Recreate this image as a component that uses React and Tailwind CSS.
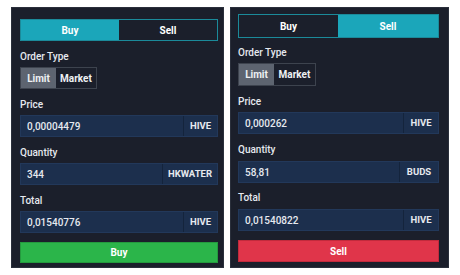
import React from "react";

function Field({ value, unit, unitW, h = "h-[22px]" }) {
  return (
    <div className={`flex ${h} bg-[#1c2f4d] border border-[#22385a]`}>
      <div className="flex-1 flex items-center pl-[6px] text-[10px] font-medium text-[#e6e9ef]">{value}</div>
      <div className={`${unitW} flex items-center justify-center border-l border-[#14243c] text-[9.5px] font-bold text-[#e6e9ef]`}>{unit}</div>
    </div>
  );
}

function Label({ children, cls }) {
  return <div className={`h-[12px] leading-[12px] text-[10px] font-medium text-[#e6e9ef] ${cls}`}>{children}</div>;
}

export default function App() {
  return (
    <div className="w-[460px] h-[275px] bg-white flex pt-[7px] pl-[11px] gap-[6px]" style={{ fontFamily: 'Roboto, "Noto Sans", sans-serif' }}>
      {/* Left panel */}
      <div className="w-[213px] h-[261px] bg-[#1b1f2b] border border-[#2a2f3b] pl-[8px] pr-[5px] pt-[11px] flex flex-col">
        <div className="flex h-[22px] border border-[#1b8a9a]">
          <div className="flex-1 flex items-center justify-center bg-[#1ba6ba] text-[10px] font-bold text-white">Buy</div>
          <div className="flex-1 flex items-center justify-center text-[10px] font-bold text-white">Sell</div>
        </div>
        <Label cls="mt-[10px]">Order Type</Label>
        <div className="mt-[4px] flex h-[22px] w-[77px] border border-[#3d434e]">
          <div className="w-[35px] flex items-center justify-center bg-[#5d6470] text-[10px] font-bold text-[#eef0f3]">Limit</div>
          <div className="flex-1 flex items-center justify-center text-[10px] font-bold text-[#eef0f3]">Market</div>
        </div>
        <Label cls="mt-[10px]">Price</Label>
        <div className="mt-[4px]"><Field value="0,00004479" unit="HIVE" unitW="w-[34px]" /></div>
        <Label cls="mt-[10px]">Quantity</Label>
        <div className="mt-[4px]"><Field value="344" unit="HKWATER" unitW="w-[55px]" /></div>
        <Label cls="mt-[10px]">Total</Label>
        <div className="mt-[4px]"><Field value="0,01540776" unit="HIVE" unitW="w-[34px]" /></div>
        <div className="mt-[9px] h-[21px] flex items-center justify-center bg-[#2bb54a] border border-[#249a3e] text-[10px] font-bold text-white">Buy</div>
      </div>

      {/* Right panel */}
      <div className="w-[219px] h-[261px] bg-[#1b1f2b] border border-[#2a2f3b] pl-[7px] pr-[9px] pt-[6px] flex flex-col">
        <div className="flex h-[24px] border border-[#1b8a9a]">
          <div className="w-[99px] flex items-center justify-center text-[10px] font-bold text-white">Buy</div>
          <div className="flex-1 flex items-center justify-center bg-[#1ba6ba] text-[10px] font-bold text-white">Sell</div>
        </div>
        <Label cls="mt-[9px]">Order Type</Label>
        <div className="mt-[4px] flex h-[23px] w-[78px] border border-[#3d434e]">
          <div className="w-[35px] flex items-center justify-center bg-[#5d6470] text-[10px] font-bold text-[#eef0f3]">Limit</div>
          <div className="flex-1 flex items-center justify-center text-[10px] font-bold text-[#eef0f3]">Market</div>
        </div>
        <Label cls="mt-[10px]">Price</Label>
        <div className="mt-[4px]"><Field value="0,000262" unit="HIVE" unitW="w-[35px]" /></div>
        <Label cls="mt-[10px]">Quantity</Label>
        <div className="mt-[5px]"><Field value="58,81" unit="BUDS" unitW="w-[39px]" /></div>
        <Label cls="mt-[9px]">Total</Label>
        <div className="mt-[5px]"><Field value="0,01540822" unit="HIVE" unitW="w-[35px]" /></div>
        <div className="mt-[9px] h-[22px] flex items-center justify-center bg-[#e0354a] border border-[#c22a3c] text-[10px] font-bold text-white">Sell</div>
      </div>
    </div>
  );
}
